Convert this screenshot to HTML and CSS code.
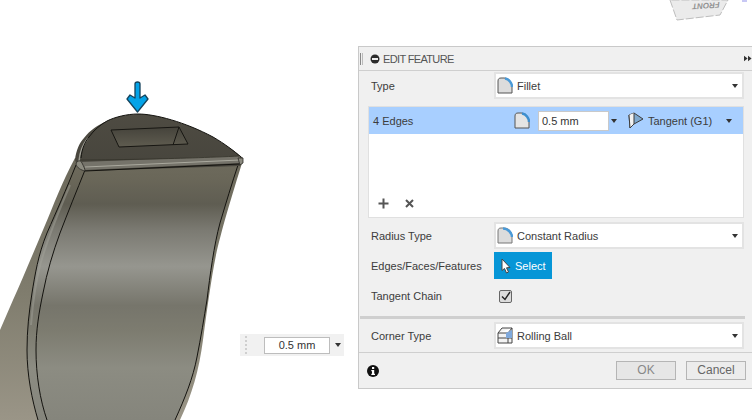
FILE: index.html
```html
<!DOCTYPE html>
<html lang="en">
<head>
<meta charset="UTF-8">
<title>Edit Feature</title>
<link rel="stylesheet" href="styles.css">
</head>
<body>

<svg class="scene" viewBox="0 0 752 420" width="752" height="420">
  <defs>
    <linearGradient id="bodyShade" x1="0" y1="160" x2="0" y2="420" gradientUnits="userSpaceOnUse">
      <stop offset="0" stop-color="#6e6b5d"/>
      <stop offset="0.07" stop-color="#6a6759"/>
      <stop offset="0.17" stop-color="#5f5d52"/>
      <stop offset="0.27" stop-color="#7b7a72"/>
      <stop offset="0.41" stop-color="#96968f"/>
      <stop offset="0.56" stop-color="#76756b"/>
      <stop offset="0.66" stop-color="#7d7c70"/>
      <stop offset="0.8" stop-color="#8c8c82"/>
      <stop offset="1" stop-color="#85857c"/>
    </linearGradient>
    <linearGradient id="sideShade" x1="0" y1="160" x2="0" y2="420" gradientUnits="userSpaceOnUse">
      <stop offset="0" stop-color="#6c695b"/>
      <stop offset="0.5" stop-color="#7f7c6d"/>
      <stop offset="1" stop-color="#9a9587"/>
    </linearGradient>
    <linearGradient id="topShade" x1="0" y1="114" x2="0" y2="168" gradientUnits="userSpaceOnUse">
      <stop offset="0" stop-color="#4e4b42"/>
      <stop offset="1" stop-color="#47453d"/>
    </linearGradient>
    <linearGradient id="slotShade" x1="0" y1="127" x2="0" y2="147" gradientUnits="userSpaceOnUse">
      <stop offset="0" stop-color="#45433b"/>
      <stop offset="1" stop-color="#5f5c50"/>
    </linearGradient>
  </defs>

  <!-- outer silhouette and side fillet -->
  <path d="M75 158 C62 182 54 204 43 230 C32 256 22 280 13 300 L0 330 V420 H180 C192 395 199 370 203 340 C207 310 211 280 216 255 C221 232 232 195 243 160 Z" fill="url(#sideShade)"/>
  <path d="M76 165 C66 190 57 210 47 233 C38 255 35 275 32 293 C29 312 27 330 27 350 C27 375 32 400 38 420 H47 C40 400 36 375 36 350 C36 330 39 312 43 293 C47 272 53 252 60 233 C68 212 77 190 85 170 Z" fill="url(#bodyShade)"/>
  <path d="M70 185 C60 208 48 238 41 262 C36 280 33 300 31 325" fill="none" stroke="#a3a39b" stroke-width="2" opacity="0.45"/>
  <!-- front face -->
  <path d="M85 170 C77 190 68 212 60 233 C53 252 47 272 43 293 C39 312 36 330 36 350 C36 375 40 400 47 420 H175 C185 398 193 378 197 357 C201 337 204 318 207 300 C210 275 214 245 220 223 C226 203 232 183 238 165 Z" fill="url(#bodyShade)"/>
  <path class="edge" d="M85 170 C77 190 68 212 60 233 C53 252 47 272 43 293 C39 312 36 330 36 350 C36 375 40 400 47 420"/>
  <path class="edge" d="M76 165 C66 190 57 210 47 233 C38 255 35 275 32 293 C29 312 27 330 27 350 C27 375 32 400 38 420"/>
  <path class="edge" d="M238 165 C232 183 226 203 220 223 C214 245 210 275 207 300 C204 318 201 337 197 357 C193 378 185 398 175 420"/>
  <!-- top face -->
  <path d="M75 160 C76 150 80 142 84 138 C90 130 98 125 107 121 C115 117 127 114 138 114 C155 114 185 122 213 137 C225 144 236 152 243 158 L240 166 L85 171 L78 167 Z" fill="url(#topShade)"/>
  <path d="M79 161 C80 150 84 143 88 138" fill="none" stroke="#a09f96" stroke-width="1.500"/>
  <path class="edge" d="M81 158 C82 148 85 142 89 137 C94 130 100 125 107 121 C115 117 127 114 138 114 C155 114 185 122 213 137 C225 144 234 151 241 157"/>
  <path d="M80 162 L240 156 L241 163 L85 170 Z" fill="#75736a"/>
  <path d="M85 167 L240 160" stroke="#aaa99e" stroke-width="1" fill="none"/>
  <path class="edge thin" d="M81 160 C100 160 180 159 240 156"/>
  <path class="edge" d="M85 171 L240 164"/>
  <path d="M76 164 C77 160 81 160 82 163 C84 167 85 169 85 171 C81 170 77 168 76 164 Z" fill="#8c8b80" stroke="#2b2a25" stroke-width="0.800"/>
  <path d="M238 158 L243 158 L243 163 L240 165 Z" fill="#8c8b80" stroke="#2b2a25" stroke-width="0.800"/>
  <!-- slot -->
  <path d="M111 130 L179 127 L188 144 L119 147 Z" fill="url(#slotShade)" stroke="#171612" stroke-width="1"/>
  <path d="M179 127 L173 145" stroke="#171612" fill="none"/>
  <!-- push arrow -->
  <path d="M135 84 C135 82.500 136 82 137.500 82 C139 82 140 82.500 140 84 V98 L145 95 L148 99 L137.500 112 L127 99 L130 95 L135 98 Z" fill="#03a3e8" stroke="#16435c" stroke-width="1.300" stroke-linejoin="round"/>
  <!-- view cube -->
  <path d="M670 0 L677 20 L720 15 L728 0 Z" fill="#ebebeb" stroke="#bdbdbd" stroke-width="1" stroke-dasharray="8 2"/>
  <text class="cube-label" transform="rotate(176 706 5)" x="706" y="7">FRONT</text>
  <rect x="742" y="0" width="5" height="2" fill="#c8c8f4"/>
</svg>

<div class="dim-box">
  <span class="grip"></span>
  <span class="dim-value">0.5 mm</span>
  <span class="caret dim-caret"></span>
</div>

<div class="panel">
  <div class="panel-head">
    <span class="head-grip"></span>
    <svg class="head-icon" viewBox="0 0 10 10" width="10" height="10"><circle cx="5" cy="5" r="4.500" fill="#2b2b2b"/><rect x="2" y="4" width="6" height="2" fill="#eee"/></svg>
    <span class="head-title">EDIT FEATURE</span>
    <span class="head-more">
      <svg viewBox="0 0 10 7" width="10" height="7"><path d="M0 0 L4.500 3.500 L0 7 Z M5 0 L9.500 3.500 L5 7 Z" fill="#333"/></svg>
    </span>
  </div>

  <div class="row first-row">
    <span class="label">Type</span>
    <div class="select">
      <svg class="fillet-icon" viewBox="0 0 16 17" width="16" height="17"><path d="M1 16 V4 C1 2 2 1 4 1 H7 C12 1 15 5 15 10 V16 Z" fill="#dcdcdc" stroke="#555" stroke-width="1"/><path d="M8 1.500 C12 2 15 6 15 10" fill="none" stroke="#4a9ad8" stroke-width="2.500"/></svg>
      <span class="select-text">Fillet</span>
      <span class="caret"></span>
    </div>
  </div>

  <div class="edge-list">
    <div class="edge-row">
      <span class="edge-name">4 Edges</span>
      <svg class="fillet-icon" viewBox="0 0 16 17" width="16" height="17"><path d="M1 16 V4 C1 2 2 1 4 1 H7 C12 1 15 5 15 10 V16 Z" fill="#e4e4e4" stroke="#555" stroke-width="1"/><path d="M8 1.500 C12 2 15 6 15 10" fill="none" stroke="#3d8fd0" stroke-width="2.500"/></svg>
      <span class="edge-input">0.5 mm</span>
      <span class="caret edge-caret"></span>
      <svg class="tangent-icon" viewBox="0 0 16 17" width="16" height="17"><path d="M1 3 L6 1 L15 7 L6 12 L2 16 Z" fill="#7fa9cf" stroke="#3c3c3c" stroke-width="1"/><path d="M1 3 L2 16 L6 12 L6 1" fill="#f2f2f2" stroke="#3c3c3c" stroke-width="1"/></svg>
      <span class="edge-tangent">Tangent (G1)</span>
      <span class="caret tangent-caret"></span>
    </div>
    <div class="list-tools">
      <svg viewBox="0 0 11 11" width="11" height="11"><path d="M5.500 0.500 V10.500 M0.500 5.500 H10.500" stroke="#555" stroke-width="2" fill="none"/></svg>
      <svg viewBox="0 0 9 9" width="9" height="9"><path d="M1 1 L8 8 M8 1 L1 8" stroke="#555" stroke-width="2" fill="none"/></svg>
    </div>
  </div>

  <div class="row radius-row">
    <span class="label">Radius Type</span>
    <div class="select">
      <svg class="fillet-icon" viewBox="0 0 16 17" width="16" height="17"><path d="M1 16 V4 C1 2 2 1 4 1 H7 C12 1 15 5 15 10 V16 Z" fill="#dcdcdc" stroke="#777" stroke-width="1"/><path d="M6 1.500 C11 1.500 15 6 15 10" fill="none" stroke="#4a9ad8" stroke-width="2.500"/></svg>
      <span class="select-text">Constant Radius</span>
      <span class="caret"></span>
    </div>
  </div>

  <div class="row select-row">
    <span class="label">Edges/Faces/Features</span>
    <div class="pick-btn">
      <svg viewBox="0 0 10 16" width="10" height="16"><path d="M1 1 V12.500 L3.500 10.500 L5.500 15 L7.500 14 L5.500 9.800 L9 9.500 Z" fill="#fff" stroke="#444" stroke-width="1" stroke-linejoin="round"/></svg>
      <span>Select</span>
    </div>
  </div>

  <div class="row tangent-row">
    <span class="label">Tangent Chain</span>
    <span class="check">
      <svg viewBox="0 0 10 10" width="10" height="10"><path d="M1 5.500 L4 8.500 L9 1" fill="none" stroke="#222" stroke-width="1.400"/></svg>
    </span>
  </div>

  <div class="divider"></div>

  <div class="row">
    <span class="label">Corner Type</span>
    <div class="select">
      <svg class="fillet-icon" viewBox="0 0 16 17" width="16" height="17"><path d="M1 6 L5 1 H15 V16 H1 Z M1 6 H11 L15 1 M11 6 V16 M1 11 H15" fill="#f3f3f3" stroke="#444" stroke-width="1"/><path d="M9 6 L15 3 V11 L9 11 Z" fill="#7fa9dc"/></svg>
      <span class="select-text">Rolling Ball</span>
      <span class="caret"></span>
    </div>
  </div>

  <div class="panel-foot">
    <svg viewBox="0 0 12 12" width="12" height="12"><circle cx="6" cy="6" r="6" fill="#111"/><rect x="5" y="2" width="2.200" height="2" fill="#fff"/><path d="M4.300 5 H7.200 V8.700 H8 V10 H4.300 V8.700 H5 V6.200 H4.300 Z" fill="#fff"/></svg>
    <span class="foot-btn ok-btn">OK</span>
    <span class="foot-btn">Cancel</span>
  </div>
</div>

</body>
</html>
```

FILE: styles.css
```css
html, body {
  margin: 0;
  padding: 0;
}
body {
  position: relative;
  width: 752px;
  height: 420px;
  overflow: hidden;
  background-color: #fff;
  font-family: "Liberation Sans", Arial, sans-serif;
  font-size: 11px;
  color: #444;
}
.scene {
  position: absolute;
  left: 0;
  top: 0;
  display: block;
}
.edge {
  fill: none;
  stroke: #14130f;
  stroke-width: 1;
}
.edge.thin {
  stroke: #33322a;
  stroke-width: 0.8;
}
.cube-label {
  font-family: "Liberation Sans", Arial, sans-serif;
  font-size: 8px;
  font-style: italic;
  font-weight: bold;
  fill: #929292;
  text-anchor: middle;
}

/* floating value box */
.dim-box {
  position: absolute;
  left: 240px;
  top: 334px;
  width: 104px;
  height: 22px;
  display: flex;
  align-items: center;
  background-color: #f1f1f1;
}
.grip {
  width: 3px;
  height: 18px;
  margin-left: 5px;
  border-left: 2px dotted #cfcfcf;
}
.dim-value {
  width: 64px;
  height: 15px;
  margin-left: 14px;
  line-height: 15px;
  text-align: center;
  background-color: #fff;
  border: 1px solid #bdbdbd;
  color: #333;
}
.dim-caret {
  margin-left: 5px;
  border-top-color: #333;
}

/* panel */
.panel {
  position: absolute;
  left: 358px;
  top: 46px;
  width: 394px;
  height: 343px;
  box-sizing: border-box;
  background-color: #f0f0f0;
  border: 1px solid #c9c9c9;
  border-right: none;
  display: flex;
  flex-direction: column;
}
.panel-head {
  height: 23px;
  flex: none;
  display: flex;
  align-items: center;
  border-bottom: 1px solid #cfcfcf;
}
.head-grip {
  width: 1px;
  height: 12px;
  margin-left: 1px;
  border-left: 1px solid #888;
  border-right: 1px solid #bbb;
}
.head-icon {
  margin-left: 7px;
}
.head-title {
  margin-left: 3px;
  font-size: 11px;
  letter-spacing: -0.65px;
  color: #555;
}
.head-more {
  margin-left: auto;
  display: flex;
  width: 8px;
  overflow: hidden;
}
.row {
  display: flex;
  align-items: center;
  flex: none;
  padding-left: 12px;
}
.first-row {
  margin-top: 1px;
}
.label {
  width: 123px;
  flex: none;
  color: #3c3c3c;
}
.select {
  width: 250px;
  height: 27px;
  box-sizing: border-box;
  display: flex;
  align-items: center;
  padding-left: 1px;
  background-color: #fff;
  border: 2px solid #e3e3e3;
}
.fillet-icon {
  flex: none;
}
.select-text {
  margin-left: 4px;
  color: #3c3c3c;
}
.caret {
  width: 0;
  height: 0;
  flex: none;
  border-left: 3px solid transparent;
  border-right: 3px solid transparent;
  border-top: 4px solid #333;
}
.select .caret {
  margin-left: auto;
  margin-right: 4px;
}

/* edge list */
.edge-list {
  width: 376px;
  height: 112px;
  box-sizing: border-box;
  flex: none;
  margin: 7px 0 0 9px;
  display: flex;
  flex-direction: column;
  background-color: #fff;
  border: 1px solid #e0e0e0;
}
.edge-row {
  height: 27px;
  flex: none;
  display: flex;
  align-items: center;
  background-color: #a8cfff;
}
.edge-name {
  width: 145px;
  flex: none;
  padding-left: 4px;
  box-sizing: border-box;
  color: #3c3c3c;
}
.edge-input {
  width: 71px;
  height: 20px;
  box-sizing: border-box;
  margin-left: 8px;
  padding-left: 3px;
  line-height: 18px;
  background-color: #fff;
  border: 1px solid #c9c9c9;
  color: #333;
}
.edge-caret {
  margin-left: 2px;
}
.tangent-icon {
  margin-left: 11px;
  flex: none;
}
.edge-tangent {
  margin-left: 4px;
  color: #3c3c3c;
}
.tangent-caret {
  margin-left: auto;
  margin-right: 11px;
}
.list-tools {
  margin-top: auto;
  height: 28px;
  display: flex;
  align-items: center;
  gap: 16px;
  padding-left: 9px;
  box-sizing: border-box;
}

.radius-row {
  margin-top: 4px;
}
.select-row {
  margin-top: 3px;
}
.pick-btn {
  width: 58px;
  height: 27px;
  box-sizing: border-box;
  display: flex;
  align-items: center;
  padding-left: 7px;
  gap: 4px;
  background-color: #0696d7;
  color: #fff;
}
.tangent-row {
  height: 34px;
}
.check {
  width: 13px;
  height: 13px;
  box-sizing: border-box;
  margin-left: 5px;
  display: flex;
  align-items: center;
  justify-content: center;
  background-color: #dcdcdc;
  border: 1px solid #666;
  border-radius: 2px;
}
.divider {
  height: 3px;
  flex: none;
  margin: 3px 7px 3px 1px;
  background-color: #cfcfcf;
}
.panel-foot {
  flex: 1;
  margin-top: 3px;
  display: flex;
  align-items: center;
  padding-left: 8px;
  padding-right: 6px;
  border-top: 1px solid #cfcfcf;
}
.foot-btn {
  width: 60px;
  height: 19px;
  box-sizing: border-box;
  line-height: 17px;
  margin-left: 10px;
  text-align: center;
  font-size: 12px;
  color: #666;
  background-color: #ececec;
  border: 1px solid #b5b5b5;
}
.ok-btn {
  margin-left: auto;
  color: #888;
  background-color: #e6e6e6;
}
```
